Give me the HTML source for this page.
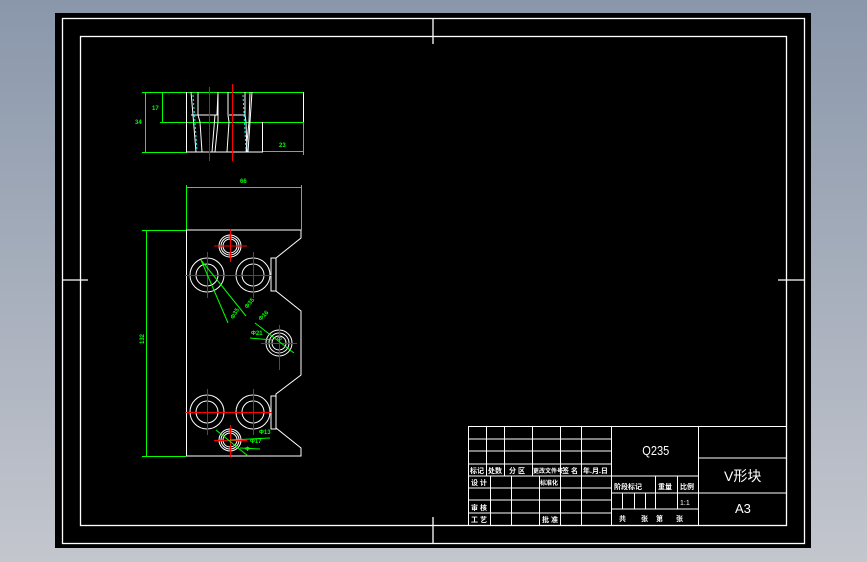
<!DOCTYPE html>
<html><head><meta charset="utf-8"><style>
html,body{margin:0;padding:0;width:867px;height:562px;overflow:hidden;background:linear-gradient(#8a97ab,#c3c6cd);}
svg{position:absolute;left:0;top:0}
text{font-family:"Liberation Sans","Noto Sans CJK SC",sans-serif;}
</style></head><body>
<svg width="867" height="562" viewBox="0 0 867 562" xmlns="http://www.w3.org/2000/svg">
<rect x="55" y="13" width="756" height="535" fill="#000"/>
<g stroke="#fff" stroke-width="1.3" fill="none">
<rect x="62.5" y="18.5" width="742" height="525"/>
<rect x="80.5" y="36.5" width="706" height="489"/>
<line x1="433" y1="18" x2="433" y2="44"/><line x1="433" y1="517" x2="433" y2="543"/>
<line x1="62" y1="280" x2="88" y2="280"/><line x1="778" y1="280" x2="804" y2="280"/>
</g>
<!-- title block -->
<g stroke="#fff" stroke-width="1" fill="none">
<rect x="468.5" y="426.5" width="318" height="99"/>
<line x1="468" y1="439" x2="611" y2="439"/><line x1="468" y1="451" x2="611" y2="451"/>
<line x1="468" y1="464" x2="611" y2="464"/><line x1="468" y1="476" x2="698" y2="476"/>
<line x1="468" y1="488" x2="611" y2="488"/><line x1="468" y1="500" x2="611" y2="500"/>
<line x1="468" y1="513" x2="611" y2="513"/>
<line x1="486.5" y1="426" x2="486.5" y2="476"/><line x1="504.5" y1="426" x2="504.5" y2="476"/>
<line x1="532.5" y1="426" x2="532.5" y2="476"/><line x1="560.5" y1="426" x2="560.5" y2="525"/>
<line x1="581.5" y1="426" x2="581.5" y2="525"/><line x1="611.5" y1="426" x2="611.5" y2="525"/>
<line x1="490.5" y1="476" x2="490.5" y2="525"/><line x1="511.5" y1="476" x2="511.5" y2="525"/>
<line x1="539.5" y1="476" x2="539.5" y2="525"/>
<line x1="698.5" y1="426" x2="698.5" y2="525"/>
<line x1="611" y1="493" x2="698" y2="493"/><line x1="611" y1="509" x2="698" y2="509"/>
<line x1="655.5" y1="476" x2="655.5" y2="509"/><line x1="677.5" y1="476" x2="677.5" y2="509"/>
<line x1="622.5" y1="493" x2="622.5" y2="509"/><line x1="634.5" y1="493" x2="634.5" y2="509"/><line x1="645.5" y1="493" x2="645.5" y2="509"/>
<line x1="698" y1="458" x2="786" y2="458"/><line x1="698" y1="493" x2="786" y2="493"/>
</g>
<g fill="#fff" font-size="7" font-weight="bold">
<text x="470" y="473">标记</text><text x="488" y="473">处数</text><text x="509" y="473">分 区</text>
<text x="533" y="473" font-size="6">更改文件号</text><text x="562" y="473">签 名</text><text x="583" y="473">年.月.日</text>
<text x="471" y="485">设 计</text><text x="540" y="485" font-size="6">标准化</text>
<text x="471" y="510">审 核</text><text x="471" y="522">工 艺</text><text x="542" y="522">批 准</text>
<text x="614" y="489">阶段标记</text><text x="658" y="489">重量</text><text x="680" y="489">比例</text>
<text x="680" y="505" font-weight="normal">1:1</text>
<text x="619" y="521">共</text><text x="641" y="521">张</text><text x="656" y="521">第</text><text x="676" y="521">张</text>
</g>
<g fill="#fff" font-size="13">
<text x="640" y="455" transform="scale(0.85 1)" transform-origin="655 450">Q235</text>
<text x="724" y="481" font-size="14">V形块</text>
<text x="735" y="513">A3</text>
</g>
<!-- top view -->
<g stroke="#0f0" stroke-width="1" fill="none">
<line x1="142" y1="92.5" x2="303" y2="92.5"/><line x1="160" y1="122.5" x2="303" y2="122.5"/>
<line x1="142" y1="152.5" x2="187" y2="152.5"/><line x1="262" y1="151.5" x2="303" y2="151.5"/>
<line x1="145.5" y1="92" x2="145.5" y2="152"/><line x1="162.5" y1="92" x2="162.5" y2="122"/>
<line x1="303.5" y1="122" x2="303.5" y2="155"/>
<line x1="186" y1="187.5" x2="301" y2="187.5"/><line x1="186.5" y1="185" x2="186.5" y2="230"/><line x1="301.5" y1="185" x2="301.5" y2="230"/>
<line x1="146.5" y1="230" x2="146.5" y2="456"/><line x1="142" y1="230.5" x2="186" y2="230.5"/><line x1="142" y1="456.5" x2="186" y2="456.5"/>
</g>
<g stroke="#fff" stroke-width="1" fill="none">
<polyline points="186.5,92 186.5,152 262.5,152 262.5,122"/>
<line x1="303.5" y1="92" x2="303.5" y2="122"/>
<polyline points="191,92 193,115 196,152"/><polyline points="198,92 198,115 200,122 202,152"/>
<polyline points="218,92 218,115 215,115 212,152"/><polyline points="218,115 217,115"/>
<polyline points="218,115 218,92"/><line x1="191" y1="115" x2="218" y2="115"/>
<polyline points="218,92 217,115"/>
<polyline points="228,115 229,122 227,152"/><polyline points="228,92 228,115"/>
<polyline points="229,115 245,115 246,122 247,152"/><polyline points="245,92 245,115"/>
<polyline points="250,92 249,122 246,152"/><polyline points="252,92 250,122 248,152"/>
<polyline points="218,92 218,122 215,152"/>
</g>
<g stroke="#0ff" stroke-width="1" stroke-dasharray="2 2">
<line x1="193" y1="95" x2="197" y2="150"/><line x1="243" y1="95" x2="246" y2="150"/>
</g>
<g stroke="#f00" stroke-width="1">
<line x1="209.5" y1="87" x2="209.5" y2="161"/><line x1="232.5" y1="84" x2="232.5" y2="161"/>
</g>
<g fill="#0f0" font-size="6" font-weight="bold">
<text x="135" y="124">34</text><text x="152" y="110">17</text><text x="279" y="147">23</text><text x="240" y="183">66</text>
<text x="140" y="348" transform="rotate(-90 140 344)">132</text>
</g>
<!-- front view -->
<g stroke="#fff" stroke-width="1" fill="none">
<polyline points="301,230 186.5,230 186.5,456 301,456 301,448 276,428 276,394 301,375 301,311 276,291 276,258 301,238 301,230"/>
<rect x="271" y="258" width="5" height="33"/><rect x="271" y="396" width="5" height="33"/>
<circle cx="230" cy="246" r="11"/><circle cx="230" cy="246" r="9"/><circle cx="230" cy="246" r="7"/>
<circle cx="207" cy="275" r="17"/><circle cx="207" cy="275" r="11"/>
<circle cx="253" cy="275" r="17"/><circle cx="253" cy="275" r="11"/>
<circle cx="279" cy="343" r="13"/><circle cx="279" cy="343" r="10"/><circle cx="279" cy="343" r="7"/>
<circle cx="207" cy="412" r="17"/><circle cx="207" cy="412" r="11"/>
<circle cx="253" cy="412" r="17"/><circle cx="253" cy="412" r="11"/>
<circle cx="230" cy="440" r="11"/><circle cx="230" cy="440" r="9"/><circle cx="230" cy="440" r="7"/>
</g>
<g stroke="#f00" stroke-width="1">
<line x1="214" y1="246" x2="247" y2="246"/><line x1="230.5" y1="229" x2="230.5" y2="262"/>
<line x1="185" y1="275.5" x2="272" y2="275.5"/><line x1="207.5" y1="252" x2="207.5" y2="298"/><line x1="253.5" y1="252" x2="253.5" y2="298"/>
<line x1="261" y1="343.5" x2="297" y2="343.5"/><line x1="279.5" y1="325" x2="279.5" y2="370"/>
<line x1="185" y1="412.5" x2="272" y2="412.5"/><line x1="207.5" y1="389" x2="207.5" y2="435"/><line x1="253.5" y1="389" x2="253.5" y2="435"/>
<line x1="214" y1="440.5" x2="247" y2="440.5"/><line x1="230.5" y1="425" x2="230.5" y2="457"/>
</g>
<g stroke="#0f0" stroke-width="1" fill="none">
<line x1="201" y1="260" x2="228" y2="323"/><line x1="201" y1="260" x2="246" y2="316"/>
<line x1="255" y1="323" x2="294" y2="353"/><line x1="250" y1="338" x2="272" y2="340"/>
<line x1="216" y1="430" x2="248" y2="456"/><line x1="230" y1="440" x2="270" y2="438"/><line x1="240" y1="448" x2="260" y2="449"/>
</g>
<g fill="#0f0" font-size="6" font-weight="bold">
<text x="228" y="318" transform="rotate(-60 232 314)">Φ35</text>
<text x="243" y="308" transform="rotate(-50 246 304)">Φ35</text>
<text x="257" y="320" transform="rotate(-45 260 316)">Φ16</text>
<text x="251" y="335">Φ21</text><text x="277" y="341">Φ</text>
<text x="259" y="434">Φ13</text><text x="250" y="443">Φ17</text><text x="245" y="451">Φ</text>
</g>
</svg>
</body></html>
